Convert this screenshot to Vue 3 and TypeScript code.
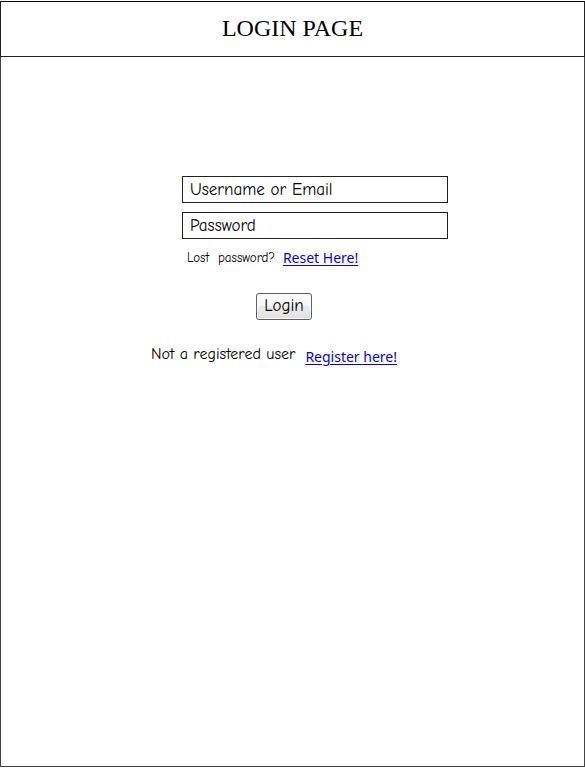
<script setup lang="ts">
import { ref } from 'vue'

const username = ref('')
const password = ref('')
</script>

<template>
  <div class="page">
    <header class="header">
      <h1 class="title">LOGIN PAGE</h1>
    </header>
    <main class="content">
      <form class="form" @submit.prevent>
        <div class="fields">
          <input v-model="username" class="field" type="text" placeholder="Username or Email" aria-label="Username or Email" />
          <input v-model="password" class="field" type="password" placeholder="Password" aria-label="Password" />
          <p class="lost">
            <span class="lost-text">Lost&nbsp; password?</span>
            <a class="link" href="#reset">Reset Here!</a>
          </p>
        </div>
        <button class="login" type="submit">Login</button>
        <p class="register">
          <span>Not a registered user</span>
          <a class="link register-link" href="#register">Register here!</a>
        </p>
      </form>
    </main>
  </div>
</template>

<style>
body {
  background: #fff;
}
</style>

<style scoped>
.page {
  box-sizing: border-box;
  min-height: 100vh;
  padding: 1px 0;
  display: flex;
  flex-direction: column;
  color: #000;
  font-family: "Comic Sans MS", "Comic Neue", "Open Sans", sans-serif;
}

.header {
  box-sizing: border-box;
  height: 56px;
  border: 1px solid #222;
  border-top-color: #000;
  padding-bottom: 2px;
  display: flex;
  align-items: center;
  justify-content: center;
}

.title {
  margin: 0;
  font: 400 24px/28px "Liberation Serif", serif;
}

.content {
  flex: 1;
  border: 1px solid #444;
  border-top: 0;
  padding: 119px 16px 32px;
}

.form {
  max-width: 311px;
  margin: 0 auto;
  display: flex;
  flex-direction: column;
}

.fields {
  margin-left: 45px;
  display: flex;
  flex-direction: column;
  gap: 9px;
}

.field {
  box-sizing: border-box;
  width: 100%;
  height: 27px;
  margin: 0;
  padding: 0 7px 1px;
  border: 1px solid #222;
  border-radius: 0;
  background: #fff;
  color: #000;
  font: 400 17px/20px "Comic Sans MS", "Comic Neue", "Open Sans", sans-serif;
}

.field::placeholder {
  color: #000;
  opacity: 1;
}

.lost {
  margin: 0 0 0 5px;
  display: flex;
  align-items: center;
  gap: 8px;
  line-height: 20px;
  white-space: nowrap;
}

.lost-text {
  font-size: 13px;
}

.link {
  color: #00f;
  font: 400 14px/20px "Noto Sans", sans-serif;
  text-decoration: underline;
  text-underline-offset: 2px;
}

.login {
  box-sizing: border-box;
  width: 56px;
  height: 27px;
  margin: 25px 0 0 119px;
  padding: 0 0 1px;
  border: 1px solid #606060;
  border-radius: 3px;
  background: linear-gradient(#fcfcfc 0%, #f6f6f6 48%, #ebebeb 50%, #e2e2e2 100%);
  box-shadow: inset 0 0 0 1px #fcfcfc;
  color: #000;
  font: 400 17px/20px "Comic Sans MS", "Comic Neue", "Open Sans", sans-serif;
}

.register {
  margin: 24px 0 0 14px;
  display: flex;
  gap: 10px;
  font-size: 16px;
  line-height: 20px;
  white-space: nowrap;
}

.register-link {
  padding-top: 3px;
}
</style>
